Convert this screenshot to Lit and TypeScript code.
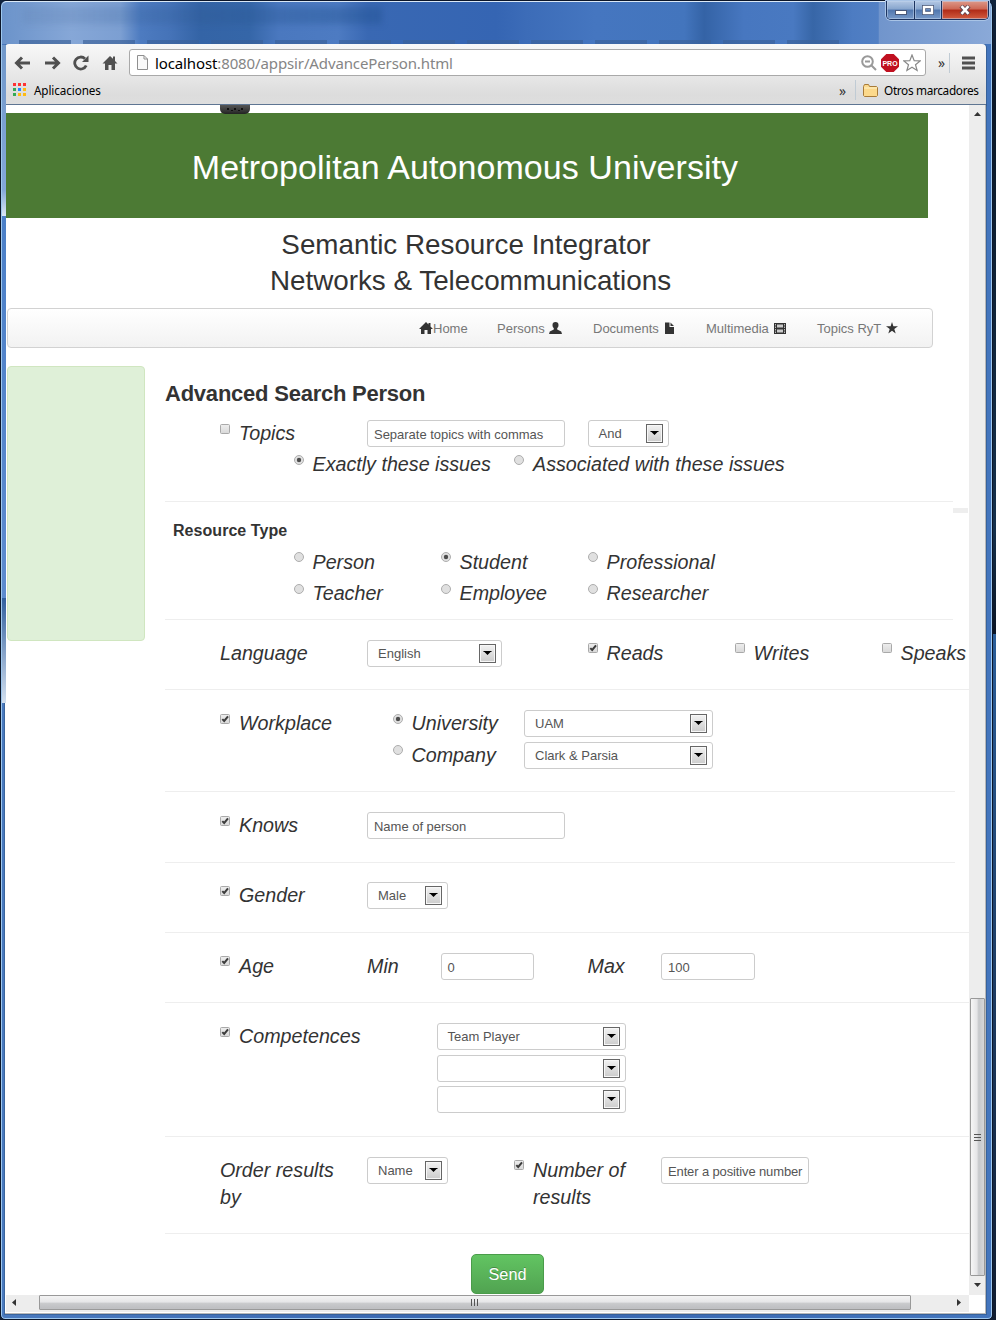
import { LitElement, html, css, svg } from "lit";
import { customElement } from "lit/decorators.js";

const check = (on = false) => html`<i class="cb"><svg width="10" height="10" viewBox="0 0 10 10"><rect x=".5" y=".5" width="9" height="9" rx="1" fill="url(#cg)" stroke="#a9a9a9"/><defs><linearGradient id="cg" x2="0" y2="1"><stop stop-color="#eee"/><stop offset="1" stop-color="#d8d8d8"/></linearGradient></defs>${on ? svg`<path d="M2.3 5.1 4.2 7 8 2.4" fill="none" stroke="#3c3c3c" stroke-width="2"/>` : ""}</svg></i>`;
const radio = (on = false) => html`<i class="cb"><svg width="10" height="10" viewBox="0 0 10 10"><circle cx="5" cy="5" r="4.5" fill="#e0e0e0" stroke="#adadad"/>${on ? svg`<circle cx="5" cy="5" r="2.2" fill="#4c4c4c"/>` : ""}</svg></i>`;
const opt = (icon: unknown, text: string, up = 0) => html`<span class="opt ${up ? "up" : ""}">${icon}<em>${text}</em></span>`;
const select = (w: number, text: string) => html`<span class="sel" style="width:${w}px"><span>${text}</span><b><svg width="9" height="5" viewBox="0 0 9 5"><path d="M.5 0h8v1h-1L4.5 4 1.5 1h-1z" fill="#000"/></svg></b></span>`;
const input = (w: number, text: string) => html`<span class="inp" style="width:${w}px"><span>${text}</span></span>`;

@customElement("app-root")
export class AppRoot extends LitElement {
  static styles = css`
    :host { display: block; width: 996px; height: 1322px; overflow: hidden; font-family: "Liberation Sans", Arial, sans-serif; color: #333; }
    * { box-sizing: border-box; }
    svg { display: block; flex: none; }
    .desk { height: 1322px; background: linear-gradient(#10233d, #0b1828 8%, #15304c 40%, #0a1424 48%, #2a5d99 48%, #101c30); padding-right: 3px; display: flex; flex-direction: column; border-bottom: 2px solid #fff; }
    .win { height: 1320px; border: 1px solid #0c1629; border-radius: 6px 7px 5px 5px; padding: 0 6px 5px 4px; box-shadow: inset 0 0 0 1px #9fc8ee; display: flex; flex-direction: column;
      background: linear-gradient(90deg, #4a7abf, #3866b0 50%, #4375bd); position: relative; }
    .left { position: absolute; left: 1px; top: 44px; width: 4px; height: 658px; background: linear-gradient(#7198ca, #83a7d9 22%, #dce7f4 26%, #4c80c8 26%, #5d8bce 84%, #315f9e 84%, #d3e0ef); }
    .title { height: 43px; flex: none; margin: 0 -5px 0 -3px; display: flex; justify-content: flex-end; align-items: flex-start; border-top: 1px solid #dbe9f7; border-radius: 5px 6px 0 0;
      background: linear-gradient(90deg, #6b93ca 0, #86a7d7 7%, #7ea1d3 12%, #6a92cc 24%, #4a79bf 27%, #416fb3 35%, #33629f 42%, #3a69ae 50%, #4b79c0 54%, #4d7bc2 65%, #3c6bb6 70%, #3766b2 74%, #3565b3 80%, #4779c2 88%, #5280c4 89%, #7195cc 89.5%, #8aa9d8 100%);
      background: linear-gradient(90deg, #6b93ca 0, #86a7d7 7%, #7c9fd2 12%, #4d7bc0 14%, #4573b8 17%, #3464a6 20%, #3566a8 25%, #4a78bf 28%, #4d7bc2 34%, #3968b3 37%, #3565b3 50%, #3c6cb8 53%, #4576c0 60%, #4375bd 69%, #3463a6 71%, #4777c0 75%, #4979c1 80%, #3766a7 82%, #4d7cc2 86%, #5280c4 88.6%, #7195cc 88.7%, #8aa9d8 100%); position: relative; }
    .tabs { position: absolute; left: 17px; bottom: 0; width: 820px; height: 4px; background: repeating-linear-gradient(90deg, #3a6098 0 52px, transparent 52px 64px); opacity: .65; }
    .blur { position: absolute; left: 20px; top: 5px; width: 360px; height: 17px; background: linear-gradient(90deg, #52719e22, #20508f66); filter: blur(3px); }
    .ctl { display: flex; height: 19px; margin: -1px 2px 0 0; border: 1px solid #1c335f; border-top: 0; border-radius: 0 0 5px 5px; overflow: hidden; box-shadow: 0 0 0 1px #a9c4e6; position: relative; }
    .ctl span { display: flex; align-items: center; justify-content: center; background: linear-gradient(#b4c8e4, #87a5cd 45%, #5076ae 50%, #7799c8); box-shadow: inset 0 0 0 1px #c1d4ec88; border-right: 1px solid #1c335f; }
    .ctl span:first-child svg { margin-top: 5px; }
    .ctl span:last-child { background: linear-gradient(#dd9a8a, #cd6753 45%, #b02b17 50%, #d35c40); border: 0; }
    .chrome { height: 61px; flex: none; border-radius: 4px 4px 0 0; border-bottom: 1px solid #a3a3a3; background: linear-gradient(#f8f8f8, #e8e8e8 50%, #dcdcdc 85%, #dedede); font-family: "Noto Sans", sans-serif; box-shadow: 0 0 0 1px #315787aa; }
    .tool { height: 33px; display: flex; align-items: center; padding: 4px 9px 0 8px; }
    .tool > svg { margin-right: 9px; }
    .url { width: 797px; flex: none; height: 27px; background: #fff; border: 1px solid #a9a9a9; border-radius: 3px; display: flex; align-items: center; padding: 0 4px 0 7px; font-size: 15px; color: #858585; }
    .url b { font-weight: 400; color: #000; }
    .addr { flex: 1; margin-left: 7px; letter-spacing: -.12px; }
    .url .g { margin-left: 4px; }
    .chev { font: 14px "Noto Sans"; color: #333; width: 10px; flex: none; }
    .marks { height: 26px; display: flex; align-items: center; padding: 0 8px 0 8px; font-size: 12px; color: #000; white-space: nowrap; }
    .marks .a { flex: 1; margin-left: 7px; font-size: 11.7px; letter-spacing: -.1px; }
    .marks .o { width: 94px; margin-left: 6px; font-size: 11.8px; letter-spacing: -.33px; }
    .vsep { width: 1px; height: 20px; background: #c0cbd4; flex: none; }
    .view { flex: 1; min-height: 0; background: #fff; border: 1px solid #b7b7b7; border-top: 0; border-left: 0; display: flex; flex-direction: column; box-shadow: 0 0 0 1px #31578799; padding-left: 1px; }
    .mid { height: 1190px; display: flex; flex: none; }
    .page { width: 963px; overflow: hidden; position: relative; flex: none; }
    .vs { width: 17px; background: #ededed; display: flex; flex-direction: column; align-items: center; }
    .vs > svg { margin-top: 7px; }
    .vt { width: 15px; height: 278px; flex: none; margin-top: 882px; border: 1px solid #999; background: linear-gradient(90deg, #f6f6f6, #e5e5e7 45%, #c6c8cb 60%, #d6d6d8); display: flex; align-items: center; justify-content: center; border-radius: 1px; }
    .hs { height: 17px; width: 963px; background: #ededed; display: flex; align-items: flex-start; }
    .hs > svg { margin: 4px 0 0 6px; }
    .ht { width: 872px; height: 15px; margin-left: 23px; border: 1px solid #999; background: linear-gradient(#f4f4f4, #e6e6e8 45%, #c9cacc 58%, #bfc0c3 90%); display: flex; justify-content: center; align-items: center; border-radius: 1px; }
    .hs .r { margin-left: 46px; }
    .tag { position: absolute; left: 214px; top: 0; width: 30px; height: 9px; border-radius: 0 0 5px 5px; background: linear-gradient(#555, #333 70%, #222); }
    .hero { width: 922px; height: 105px; margin-top: 8px; background: #4c7a34; color: #fff; font-size: 34px; letter-spacing: .06px; text-align: center; line-height: 109px; padding-right: 4px; white-space: nowrap; }
    .sub { width: 930px; height: 90px; padding-top: 9px; text-align: center; font-size: 27.8px; line-height: 36px; }
    .sub div:first-child { padding-right: 10px; }
    .sub div { padding-right: 1px; }
    .nav { width: 926px; height: 40px; margin-left: 1px; border: 1px solid #d2d2d2; border-radius: 4px; background: linear-gradient(#fff, #f2f2f2); display: flex; align-items: center; padding-left: 411px; font-size: 13px; color: #777; }
    .nav span { display: flex; align-items: center; gap: 4px; white-space: nowrap; }
    .body { display: flex; height: 947px; margin-top: 18px; }
    .side { width: 138px; height: 275px; margin-left: 1px; border: 1px solid #d0e6c0; border-radius: 4px; background: #dff0d8; flex: none; }
    .form { margin-left: 20px; width: 804px; flex: none; }
    .form h3 { font-size: 22px; line-height: 24px; margin: 16px 0 14px; letter-spacing: -.23px; }
    .form h4 { font-size: 16px; line-height: 20px; margin: 0 0 8px 8px; padding-top: 19px; letter-spacing: .05px; }
    section { border-bottom: 1px solid #eee; }
    .short { width: 788px; } .mids { width: 790px; }
    .row { display: grid; grid-template-columns: repeat(10, 73.5px); padding-left: 55px; height: 31.5px; white-space: nowrap; align-items: start; }
    .short .row { height: 31px; }
    .row > * { grid-row: 1; }
    .opt { display: flex; align-items: flex-start; }
    .cb { width: 10px; height: 10px; margin: 4px 9px 0 0; }
    .up .cb { margin-top: 3px; }
    em { font-size: 19.7px; line-height: 27px; }
    .sel, .inp { display: flex; align-items: center; height: 27px; border: 1px solid #ccc; border-radius: 3px; background: #fff; font-size: 13px; color: #555; padding: 1px 4px 0 6px; white-space: nowrap; }
    .inp.inp span { letter-spacing: -.02px; }
    .tight .inp span { letter-spacing: -.13px; }
    .sel { padding: 0 5px 0 10px; justify-content: space-between; }
    .sel b { width: 17px; height: 19px; border: 1px solid #666; box-shadow: inset 0 0 0 1px #f7f7f7; background: linear-gradient(#f2f2f2, #ccc); display: flex; align-items: center; justify-content: center; }
    .c1 { grid-column: 1; } .c2 { grid-column: 2; } .c3 { grid-column: 3; } .c4 { grid-column: 4; } .c5 { grid-column: 5; } .c6 { grid-column: 6; } .c7 { grid-column: 7; } .c8 { grid-column: 8; } .c10 { grid-column: 10; }
    .in { margin-left: 25.5px; } .in2 { margin-left: 10px; } .in3 { margin-left: -4px; }
    .send { display: flex; align-items: center; justify-content: center; width: 73px; height: 40px; margin: 20px 0 0 306px; border: 1px solid #4a9c4a; border-radius: 5px; background: linear-gradient(#62c462, #51a351); color: #fff; font-size: 16.3px; text-shadow: 0 -1px 0 #0004; }
    .stub { position: absolute; left: 947px; top: 403px; width: 15px; height: 5px; background: #eee; }
  `;

  render() {
    return html`<div class="desk"><div class="win"><div class="left"></div>
      <div class="title"><div class="blur"></div><div class="tabs"></div>
        <div class="ctl"><span style="width:28px"><svg width="12" height="5"><rect x=".5" y=".5" width="11" height="4" fill="#fff" stroke="#4a5878"/></svg></span><span style="width:27px"><svg width="12" height="10"><rect x="2" y="2" width="8" height="6" fill="none" stroke="#4a5878" stroke-width="4"/><rect x="2" y="2" width="8" height="6" fill="none" stroke="#fff" stroke-width="2.4"/></svg></span><span style="width:46px"><svg width="12" height="10" viewBox="0 0 12 10"><path d="M2 1 10 9M10 1 2 9" stroke="#5b4450" stroke-width="4.4"/><path d="M2.5 1.2 9.5 8.8M9.5 1.2 2.5 8.8" stroke="#fff" stroke-width="2.6"/></svg></span></div>
      </div>
      <div class="chrome">
        <div class="tool">
          <svg width="20" height="16" viewBox="0 0 20 16"><path d="M9 2.5 3.500 8 9 13.500M4 8h13" fill="none" stroke="#505050" stroke-width="3"/></svg>
          <svg width="20" height="16" viewBox="0 0 20 16"><path d="M11 2.500 16.500 8 11 13.500M3 8h13" fill="none" stroke="#505050" stroke-width="3"/></svg>
          <svg width="20" height="16" viewBox="0 0 20 16"><path d="M15.200 10.500A6 6 0 1 1 14 3.800" fill="none" stroke="#505050" stroke-width="2.800"/><path d="M17.500 0.500V7h-6.500z" fill="#505050"/></svg>
          <svg width="20" height="16" viewBox="0 0 20 16"><path d="M10 1 2.500 8.500H5V15h3.500v-5h3v5H15V8.500h2.500L15 6V1.500h-2v2.300z" fill="#505050"/></svg>
          <div class="url"><svg width="11" height="15" viewBox="0 0 11 15"><path d="M.5.500h6.500l3.500 3.500v10.500H.5zM7 .5V4h3.500" fill="#fafafa" stroke="#8f8f8f"/></svg><span class="addr"><b>localhost</b>:8080/appsir/AdvancePerson.html</span>
            <svg class="g" width="16" height="16" viewBox="0 0 16 16" fill="none" stroke="#999" stroke-width="2"><circle cx="6.500" cy="6.500" r="5.300"/><path d="M4 6.500h5M10.500 10.500 15 15"/></svg>
            <svg class="g" width="18" height="18" viewBox="0 0 18 18"><path d="M5.300 0h7.400L18 5.300v7.400L12.700 18H5.300L0 12.700V5.300z" fill="#c01020"/><text x="9" y="11.800" text-anchor="middle" font-family="Liberation Sans" font-size="7" font-weight="bold" fill="#fff">PRO</text></svg>
            <svg class="g" width="18" height="18" viewBox="0 0 18 18"><path d="m9 1 2.200 5.600 6 .3-4.700 3.800 1.600 5.800L9 13.200l-5.100 3.300 1.600-5.800L.8 6.900l6-.3z" fill="#fff" stroke="#888" stroke-width="1.200"/></svg>
          </div>
          <span class="chev" style="margin-left:12px">»</span><span class="vsep" style="margin:0 12px 0 1px"></span>
          <svg width="13" height="14"><path d="M0 2h13M0 7h13M0 12h13" stroke="#505050" stroke-width="3"/></svg>
        </div>
        <div class="marks"><svg width="14" height="14">${["#f33", "#f33", "#f33", "#3a5", "#28f", "#fb1", "#3a5", "#fb1", "#fb1"].map((c, i) => svg`<rect x=${(i % 3) * 5} y=${Math.floor(i / 3) * 5} width="3" height="3" fill=${c}/>`)}</svg>
          <span class="a">Aplicaciones</span><span class="chev">»</span><span class="vsep" style="margin:0 7px 0 6px"></span>
          <svg width="15" height="13" viewBox="0 0 15 13"><path d="M.5 11.500v-9l1-2h4l1 2h7l1 1v8l-1 1h-12z" fill="#fcd98b" stroke="#a87b39"/><path d="M1 4h13" stroke="#fff2c8"/></svg><span class="o">Otros marcadores</span></div>
      </div>
      <div class="view"><div class="mid"><div class="page">
        <div class="hero">Metropolitan Autonomous University</div><div class="tag"><svg width="30" height="8"><path d="M7 3h2v2h-2zM11 5h2v1h-2zM14 3h2v2h-2zM18 5h2v1h-2zM21 3h2v2h-2z" fill="#111"/></svg></div>
        <div class="sub"><div>Semantic Resource Integrator</div><div>Networks &amp; Telecommunications</div></div>
        <div class="nav">
          <span style="width:78px;gap:0"><svg width="14" height="12" viewBox="0 0 14 12"><path d="M7 0 0 7h2v5h3.500V8h3v4H12V7h2l-2.500-2.600V1h-2v1.400z" fill="#333"/></svg>Home</span>
          <span style="width:96px">Persons<svg width="13" height="12" viewBox="0 0 13 12"><path d="M6.500 0C8.500 0 9.600 1.200 9.500 3c0 1.600-.5 2.400-1.300 3.200v1.300l4 2 .8 2.500H0l.8-2.500 4-2V6.200C4 5.400 3.500 4.600 3.500 3 3.400 1.200 4.500 0 6.500 0z" fill="#333"/></svg></span>
          <span style="width:113px;gap:6px">Documents<svg width="9" height="12" viewBox="0 0 9 12"><path d="M0 .5h4.500v4.500H9v7H0zM5.500.5 9 4H5.500z" fill="#333"/></svg></span>
          <span style="width:111px;gap:5px">Multimedia<svg width="12" height="11" viewBox="0 0 12 11"><path d="M0 0h12v11H0z" fill="#333"/><path d="M3 1.500h6v3H3zM3 6.500h6v3H3z" fill="#ccc"/><path d="M1.500 1v9M10.500 1v9" stroke="#bbb" stroke-dasharray="1.500 1"/></svg></span>
          <span style="gap:5px">Topics RyT<svg width="12" height="12" viewBox="0 0 12 12"><path d="m6 0 1.400 4.300H12L8.300 7l1.400 4.500L6 8.800l-3.700 2.700L3.700 7 0 4.300h4.600z" fill="#333"/></svg></span>
        </div>
        <div class="body"><aside class="side"></aside><main class="form">
          <h3>Advanced Search Person</h3>
          <section class="short" style="height:82px">
            <div class="row"><div class="c1">${opt(check(), "Topics")}</div><div class="c3">${input(198, "Separate topics with commas")}</div><div class="c6">${select(81, "And")}</div></div>
            <div class="row"><div class="c2">${opt(radio(true), "Exactly these issues")}</div><div class="c5">${opt(radio(), "Associated with these issues")}</div></div>
          </section>
          <section class="short" style="height:118px"><h4>Resource Type</h4>
            <div class="row"><div class="c2">${opt(radio(), "Person", 1)}</div><div class="c4">${opt(radio(true), "Student", 1)}</div><div class="c6">${opt(radio(), "Professional", 1)}</div></div>
            <div class="row"><div class="c2">${opt(radio(), "Teacher")}</div><div class="c4">${opt(radio(), "Employee")}</div><div class="c6">${opt(radio(), "Researcher")}</div></div>
          </section>
          <section style="height:70px;padding-top:20px"><div class="row"><em class="c1">Language</em><div class="c3">${select(135, "English")}</div><div class="c6">${opt(check(true), "Reads", 1)}</div><div class="c8">${opt(check(), "Writes", 1)}</div><div class="c10">${opt(check(), "Speaks", 1)}</div></div></section>
          <section class="mids" style="height:102px;padding-top:20px">
            <div class="row"><div class="c1">${opt(check(true), "Workplace")}</div><div class="c3 in">${opt(radio(true), "University")}</div><div class="c5 in2">${select(189, "UAM")}</div></div>
            <div class="row"><div class="c3 in">${opt(radio(), "Company", 1)}</div><div class="c5 in2">${select(189, "Clark & Parsia")}</div></div>
          </section>
          <section class="mids" style="height:71px;padding-top:20px"><div class="row"><div class="c1">${opt(check(true), "Knows")}</div><div class="c3">${input(198, "Name of person")}</div></div></section>
          <section style="height:70px;padding-top:19px"><div class="row"><div class="c1">${opt(check(true), "Gender")}</div><div class="c3">${select(81, "Male")}</div></div></section>
          <section style="height:70px;padding-top:20px"><div class="row"><div class="c1">${opt(check(true), "Age", 1)}</div><em class="c3">Min</em><div class="c4">${input(93, "0")}</div><em class="c6">Max</em><div class="c7">${input(94, "100")}</div></div></section>
          <section style="height:134px;padding-top:20px">
            <div class="row"><div class="c1">${opt(check(true), "Competences")}</div><div class="c4 in3">${select(189, "Team Player")}</div></div>
            <div class="row"><div class="c4 in3">${select(189, "")}</div></div><div class="row"><div class="c4 in3">${select(189, "")}</div></div>
          </section>
          <section style="height:97px;padding-top:20px"><div class="row"><em class="c1">Order results<br>by</em><div class="c3">${select(81, "Name")}</div><div class="c5"><span class="opt up">${check(true)}<em>Number of<br>results</em></span></div><div class="c7 tight">${input(148, "Enter a positive number")}</div></div></section>
          <div class="send">Send</div>
        </main></div><div class="stub"></div>
      </div>
      <div class="vs"><svg width="7" height="4"><path d="M0 4 3.500 0 7 4z" fill="#333"/></svg><div class="vt"><svg width="7" height="7"><path d="M0 .5h7M0 3.500h7M0 6.500h7" stroke="#555"/></svg></div><svg width="7" height="4"><path d="M0 0h7L3.500 4z" fill="#333"/></svg></div></div>
      <div class="hs"><svg width="4" height="7"><path d="M4 0v7L0 3.500z" fill="#333"/></svg><div class="ht"><svg width="8" height="7"><path d="M.5 0v7M3.500 0v7M6.500 0v7" stroke="#555"/></svg></div><svg class="r" width="4" height="7"><path d="M0 0v7L4 3.500z" fill="#333"/></svg></div>
      </div></div></div>`;
  }
}
